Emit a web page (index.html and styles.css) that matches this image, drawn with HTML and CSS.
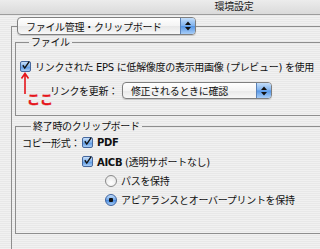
FILE: index.html
```html
<!DOCTYPE html>
<html>
<head>
  <title>環境設定</title>
  <meta charset="UTF-8">
  <link rel="stylesheet" href="styles.css">
</head>
<body>
  <div class="window">
    <div class="titlebar">環境設定</div>

    <div class="content">
      <fieldset class="pane">
        <legend class="popup popup-main">
          <span class="popup-text">ファイル管理・クリップボード</span>
          <span class="popup-arrows">
            <svg width="6" height="10" viewBox="0 0 6 10"><path d="M0 4 L3 0.5 L6 4 Z M0 6 L3 9.5 L6 6 Z" fill="#111"/></svg>
          </span>
        </legend>

        <!-- file group -->
        <fieldset class="group group-file">
          <legend>ファイル</legend>
          <div class="row row-preview">
            <span class="check-wrap">
              <span class="checkbox">
                <svg width="11" height="11" viewBox="0 0 11 11"><path d="M2.2 5.2 L4.6 8.6 L10 0.8" fill="none" stroke="#111" stroke-width="1.7"/></svg>
              </span>
              <!-- annotation drawn over the form -->
              <span class="note">
                <svg class="note-arrow" width="10" height="22" viewBox="0 0 10 22"><path d="M5 2 L5 22 M1.5 6.5 L5 1.5 L8.5 6.5" fill="none" stroke="#e5141b" stroke-width="1.6"/></svg>
                <span class="note-text">ここ</span>
              </span>
            </span>
            <span>リンクされた EPS に低解像度の表示用画像 (プレビュー) を使用</span>
          </div>
          <div class="row row-update">
            <span class="update-label">リンクを更新：</span>
            <span class="popup popup-small">
              <span class="popup-text">修正されるときに確認</span>
              <span class="popup-arrows">
                <svg width="6" height="10" viewBox="0 0 6 10"><path d="M0 4 L3 0.5 L6 4 Z M0 6 L3 9.5 L6 6 Z" fill="#111"/></svg>
              </span>
            </span>
          </div>
        </fieldset>

        <!-- clipboard group -->
        <fieldset class="group group-clip">
          <legend>終了時のクリップボード</legend>
          <div class="clip-grid">
            <span class="copy-label">コピー形式：</span>
            <div class="row">
              <span class="checkbox">
                <svg width="11" height="11" viewBox="0 0 11 11"><path d="M2.2 5.2 L4.6 8.6 L10 0.8" fill="none" stroke="#111" stroke-width="1.7"/></svg>
              </span>
              <b>PDF</b>
            </div>
            <div class="row col-2">
              <span class="checkbox">
                <svg width="11" height="11" viewBox="0 0 11 11"><path d="M2.2 5.2 L4.6 8.6 L10 0.8" fill="none" stroke="#111" stroke-width="1.7"/></svg>
              </span>
              <span><b>AICB</b> (透明サポートなし)</span>
            </div>
            <div class="row col-2 radio-row">
              <span class="radio"></span>
              <span>パスを保持</span>
            </div>
            <div class="row col-2 radio-row">
              <span class="radio on"></span>
              <span>アピアランスとオーバープリントを保持</span>
            </div>
          </div>
        </fieldset>
      </fieldset>
    </div>
  </div>
</body>
</html>
```

FILE: styles.css
```css
html, body {
  margin: 0;
  padding: 0;
}
body {
  width: 320px;
  height: 249px;
  overflow: hidden;
  font-family: "DejaVu Sans", "Noto Sans CJK JP", sans-serif;
  font-size: 10px;
  letter-spacing: -0.3px;
  color: #111;
  /* aqua pinstripes */
  background: repeating-linear-gradient(to bottom, #f1f1f1 0, #f1f1f1 1px, #e8e8e8 1px, #e8e8e8 2px);
}
.window {
  width: 468px;
  height: 249px;
  overflow: hidden;
}
.titlebar {
  height: 14px;
  line-height: 14px;
  text-align: center;
  font-size: 10px;
  color: #222;
  border-bottom: 1px solid #9c9c9c;
  background: linear-gradient(#ececec, #dadada);
}

.content {
  padding: 2px 0 0 11px;
}

fieldset {
  margin: 0;
  min-width: 0;
  border: 1px solid #8e8e8e;
  border-right: none;
}
.pane {
  padding: 0 0 19px 0;
}
.pane > legend {
  margin-left: 5px;
  padding: 0;
}

/* aqua popup buttons */
.popup {
  display: flex;
  box-sizing: border-box;
  border: 1px solid #7f7f7f;
  border-radius: 4px;
  background: linear-gradient(#ffffff, #f4f4f4 50%, #e8e8e8 51%, #f7f7f7);
  box-shadow: 0 1px 1px rgba(0, 0, 0, 0.15);
}
.popup-main {
  width: 179px;
  height: 18px;
}
.popup-small {
  width: 150px;
  height: 17px;
}
.popup-text {
  flex-grow: 1;
  padding-left: 8px;
  white-space: nowrap;
  overflow: hidden;
  display: flex;
  align-items: center;
}
.popup-arrows {
  width: 14px;
  flex-shrink: 0;
  display: flex;
  align-items: center;
  justify-content: center;
  border-left: 1px solid #5a82b8;
  border-radius: 0 3px 3px 0;
  background: linear-gradient(#c4defa, #7fb2ee 48%, #5596e6 52%, #a8cdf7);
}

/* group boxes */
.group {
  margin: 1px 0 0 3px;
}
.group > legend {
  margin-left: 9px;
  padding: 0 2px;
  line-height: 13px;
}
.group-file {
  padding: 10px 0 16px 4px;
}
.group-clip {
  margin-top: 4px;
  padding: 2px 0 26px 6px;
}

.row {
  display: flex;
  align-items: center;
  gap: 4px;
  white-space: nowrap;
}
.row-update {
  margin: 8px 0 0 30px;
}

.checkbox {
  width: 11px;
  height: 11px;
  box-sizing: border-box;
  flex-shrink: 0;
  border: 1px solid #46689e;
  border-radius: 2px;
  background: linear-gradient(#c9e0fa, #7db0ec 50%, #5a98e4 55%, #a9cef6);
  display: flex;
}
.checkbox svg {
  margin: -2px 0 0 0;
}
.check-wrap {
  position: relative;
  display: flex;
}

/* red "ここ" annotation */
.note {
  position: absolute;
  left: 0;
  top: 11px;
  width: 40px;
}
.note-arrow {
  display: block;
}
.note-text {
  display: block;
  margin: -2px 0 0 7px;
  font-family: "Noto Sans CJK JP", sans-serif;
  color: #e5141b;
  font-weight: bold;
  font-size: 13px;
  line-height: 13px;
  letter-spacing: 0;
  -webkit-text-stroke: 0.4px #e5141b;
}

.clip-grid {
  display: grid;
  grid-template-columns: 60px auto;
  row-gap: 4px;
  align-items: center;
}
.col-2 {
  grid-column: 2;
}
.radio-row {
  margin-left: 23px;
}
.radio {
  width: 12px;
  height: 12px;
  box-sizing: border-box;
  border-radius: 50%;
  border: 1px solid #8a8a8a;
  background: radial-gradient(circle at 50% 70%, #ffffff, #e2e2e2);
}
.radio.on {
  border-color: #3f64a0;
  background: radial-gradient(circle, #111 0, #111 2px, transparent 2.5px),
              linear-gradient(#c4defa, #6fa6ea 50%, #4f8fe2 55%, #a6ccf6);
}
b {
  font-weight: bold;
}
```
